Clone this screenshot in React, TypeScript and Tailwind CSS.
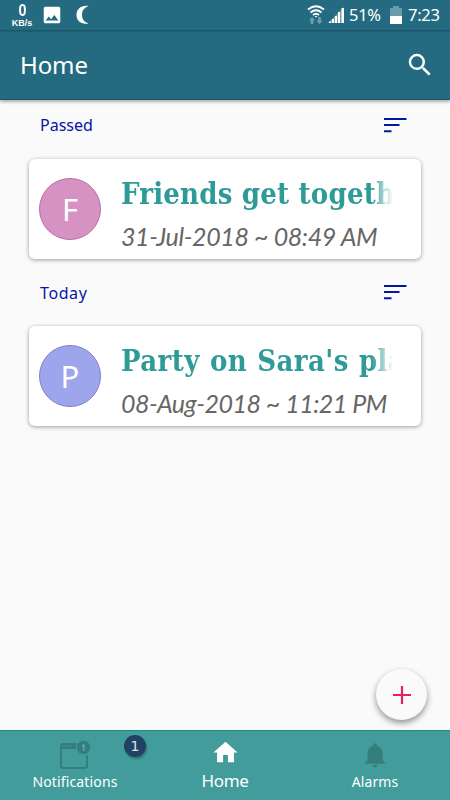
import { MdHome, MdImage, MdNotifications, MdSearch } from 'react-icons/md'

const events = [
  {
    section: 'Passed',
    title: 'Friends get togeth',
    date: '31-Jul-2018 ~ 08:49 AM',
    initial: 'F',
    avatar: 'bg-[#d592c2] border-[#b66fa4]',
    heading: 'tracking-[0px]',
    titleSpacing: 'tracking-[0.2px]',
    dateSpacing: 'tracking-[-0.38px]',
  },
  {
    section: 'Today',
    title: "Party on Sara's pla",
    date: '08-Aug-2018 ~ 11:21 PM',
    initial: 'P',
    avatar: 'bg-[#9da5ec] border-[#7c82c8]',
    heading: 'pt-px tracking-[0.6px]',
    titleSpacing: 'tracking-[0.4px] [word-spacing:0.7px]',
    dateSpacing: 'tracking-[-0.5px]',
  },
]

function StatusBar() {
  return (
    <div className="relative z-10 flex h-[30px] items-center bg-[#246b81] text-white shadow-[0_1px_2px_rgba(0,0,0,0.3)]">
      <div className="ml-[11px] flex w-[22px] flex-col items-center font-['Liberation_Sans'] font-bold">
        <span className="scale-x-90 text-[16px] leading-[15px]">0</span>
        <span className="text-[9px] leading-[10px]">KB/s</span>
      </div>
      <MdImage className="ml-[8px] size-[22px]" />
      <svg className="ml-[13px]" width="14" height="20" viewBox="0 0 14 20" fill="currentColor">
        <path d="M12.500 1C5 0 .5 4.500.5 10s4.500 10 12 8.500C8 17 6 14 6 10s2-7.500 6.500-9z" />
      </svg>
      <svg className="ml-auto" width="18" height="22" viewBox="0 0 18 22" fill="none">
        <path d="M1 5.500Q9-1 17 5.500M3.500 8.500Q9 4 14.500 8.500M6 11Q9 8.500 12 11" stroke="white" strokeWidth="1.900" />
        <path d="M7.500 12h3L9 13.500z" fill="white" />
        <path d="M5 13l3 3.200H6.300V20H3.700v-3.800H2zM12.500 20l-3-3.200h1.700V13h2.600v3.800h1.700z" fill="#6ea0b1" />
      </svg>
      <svg className="ml-[3px]" width="17" height="18" viewBox="0 0 17 18" fill="white">
        <path d="M1 15.500h2V17H1zM4 13h2v4H4zM7 10h2v7H7zM10 6h2v11h-2zM13.500 2H16v15h-2.500z" />
        <path d="M0 17L16 1V17z" opacity=".35" />
      </svg>
      <span className="ml-[4px] w-[32px] font-['Noto_Sans'] text-[16.500px] tracking-[-0.3px]">51%</span>
      <svg className="ml-[9px]" width="12" height="18" viewBox="0 0 12 18">
        <path d="M3 0h6v2h3v8H0V2h3z" fill="#699bad" />
        <path d="M0 10h12v8H0z" fill="white" />
      </svg>
      <span className="mr-[10px] ml-[6px] w-[32px] font-['Noto_Sans'] text-[16.500px] tracking-[-0.3px]">7:23</span>
    </div>
  )
}

function SortIcon() {
  return (
    <svg width="23" height="16" viewBox="0 0 23 16" fill="#0715a3">
      <path d="M0 1h22.500v2H0zM0 7h15.500v2H0zM0 13.300h7.500v2H0z" />
    </svg>
  )
}

function BottomNav() {
  return (
    <nav className="grid h-[70px] grid-cols-3 border-t border-[#168f88] bg-[#429c9c] text-white">
      <div className="relative flex flex-col items-center">
        <svg className="mt-[9px]" width="32" height="30" viewBox="0 0 32 30" fill="none">
          <path d="M17.500 4H4a2 2 0 0 0-2 2v20a2 2 0 0 0 2 2h22a2 2 0 0 0 2-2V15.500" stroke="#347f7e" strokeWidth="2" />
          <path d="M2 4h15v5H2z" fill="#347f7e" />
          <path d="M4 6h2M7 6h2M10 6h2" stroke="#429c9c" />
          <circle cx="24.500" cy="7.500" r="6.800" fill="#347f7e" />
          <path d="M23 6.500l1.800-1.500V11" stroke="#5eabaa" strokeWidth="1.500" />
        </svg>
        <span className="mt-[3px] text-[14px] leading-[18px] tracking-[0.15px]">Notifications</span>
        <span className="absolute top-[4px] left-[124px] flex size-[22px] items-center justify-center rounded-full bg-[#204263] font-['DejaVu_Sans'] text-[14px] text-[#d7e5ec] shadow-[1px_2px_2px_rgba(0,0,0,0.25)]">
          1
        </span>
      </div>
      <div className="flex flex-col items-center">
        <MdHome className="mt-[7px] size-[29px]" />
        <span className="mt-[4px] text-[17px] leading-[20px] tracking-[-0.3px]">Home</span>
      </div>
      <div className="flex flex-col items-center">
        <MdNotifications className="mt-[9px] size-[30px] text-[#347f7e]" />
        <span className="mt-[3px] text-[14px] leading-[18px] tracking-[0.1px]">Alarms</span>
      </div>
    </nav>
  )
}

export default function App() {
  return (
    <div className="relative flex h-[800px] w-[450px] flex-col overflow-hidden bg-[#fafafa] font-['Noto_Sans',sans-serif]">
      <StatusBar />
      <header className="flex h-[70px] items-center justify-between border-b border-[#0c5870] bg-[#246b81] pr-[15px] pl-[20px] text-white shadow-[0_2px_3px_rgba(0,0,0,0.3)]">
        <h1 className="text-[24px] tracking-[-0.1px]">Home</h1>
        <MdSearch className="size-[30px]" />
      </header>
      <main className="flex-1">
        {events.map((event) => (
          <section key={event.section} className="h-[167px] pt-[13px]">
            <div className="flex h-[24px] items-center justify-between pr-[43px] pl-[40px]">
              <h2 className={`text-[16px] text-[#0715a3] ${event.heading}`}>{event.section}</h2>
              <SortIcon />
            </div>
            <article className="mx-[29px] mt-[22px] flex h-[100px] rounded-[6px] bg-white pl-[10px] shadow-[0_1px_4px_rgba(0,0,0,0.38)]">
              <div className={`mt-[19px] flex size-[62px] shrink-0 items-center justify-center rounded-full border text-[31px] text-white ${event.avatar}`}>
                {event.initial}
              </div>
              <div className="ml-[20px] w-[272px]">
                <h3 className={`mt-[16px] overflow-hidden font-['DejaVu_Serif_Condensed','DejaVu_Serif',serif] text-[29px] leading-[38px] font-bold whitespace-nowrap text-[#2f9b98] [mask-image:linear-gradient(to_right,black_92%,transparent)] ${event.titleSpacing}`}>
                  {event.title}
                </h3>
                <p className={`mt-[5px] font-['Lato',sans-serif] text-[25px] leading-[36px] whitespace-nowrap text-[#666] italic ${event.dateSpacing}`}>
                  {event.date}
                </p>
              </div>
            </article>
          </section>
        ))}
      </main>
      <button className="absolute top-[669px] left-[376px] flex size-[51px] items-center justify-center rounded-full bg-[#fafafa] shadow-[0_3px_6px_rgba(0,0,0,0.42)]">
        <svg width="18" height="18" viewBox="0 0 18 18" stroke="#e91e63" strokeWidth="2.200">
          <path d="M9 0v18M0 9h18" />
        </svg>
      </button>
      <BottomNav />
    </div>
  )
}
